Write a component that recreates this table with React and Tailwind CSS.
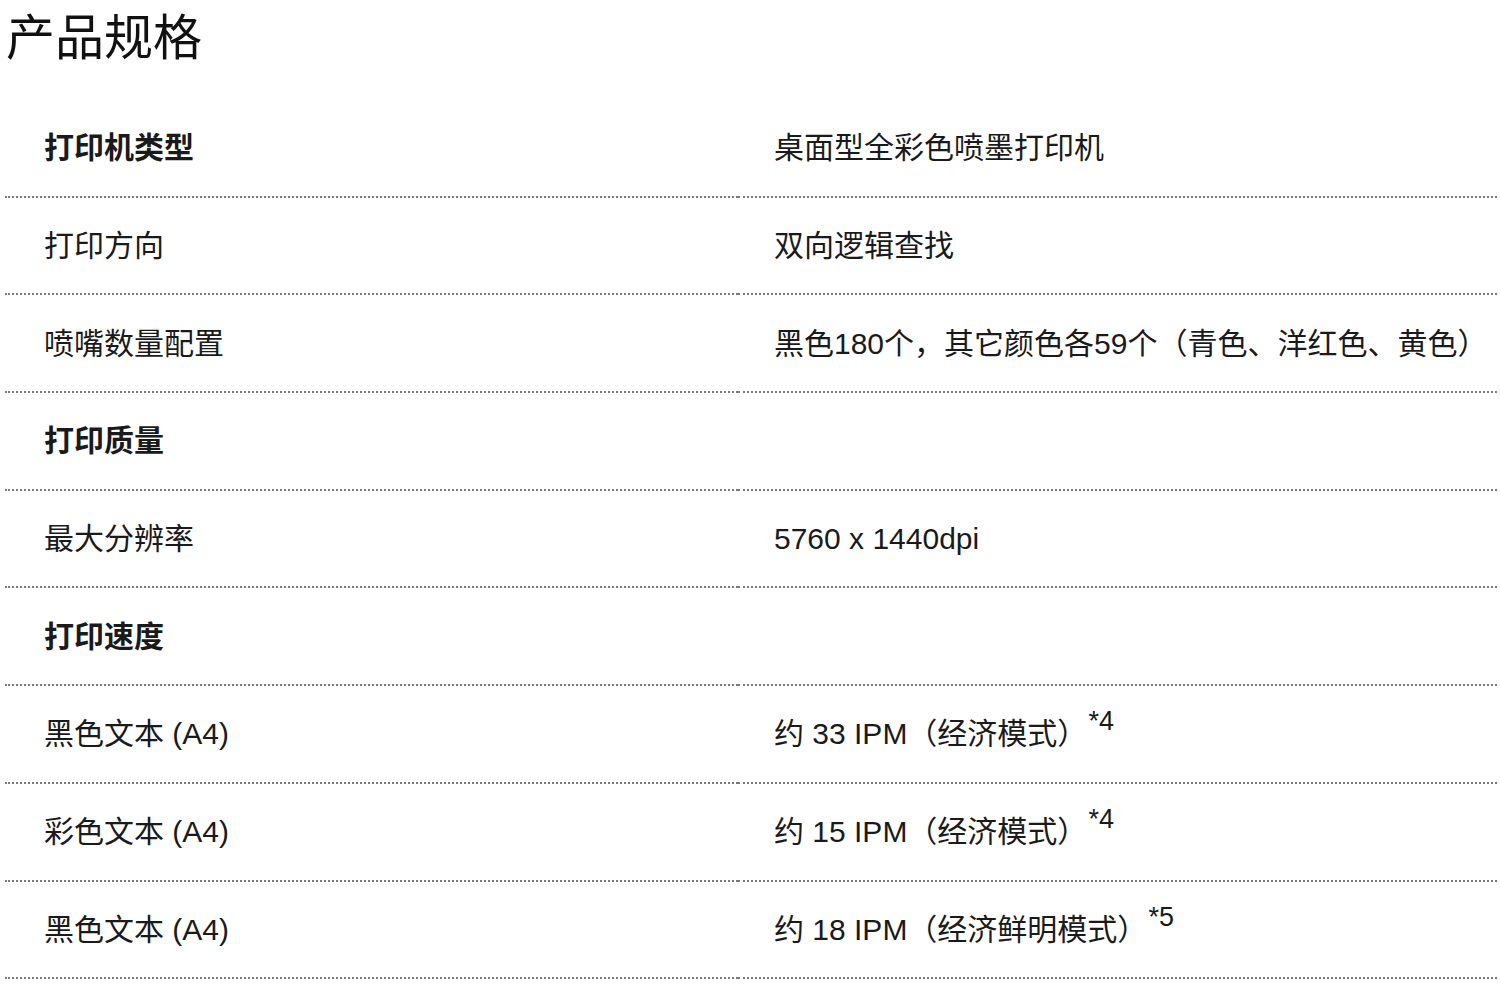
import React from 'react';

const rows = [
  { label: '打印机类型', value: '桌面型全彩色喷墨打印机', bold: true },
  { label: '打印方向', value: '双向逻辑查找' },
  { label: '喷嘴数量配置', value: '黑色180个，其它颜色各59个（青色、洋红色、黄色）' },
  { label: '打印质量', value: '', bold: true },
  { label: '最大分辨率', value: '5760 x 1440dpi' },
  { label: '打印速度', value: '', bold: true },
  { label: '黑色文本 (A4)', value: '约 33 IPM（经济模式）', note: '*4' },
  { label: '彩色文本 (A4)', value: '约 15 IPM（经济模式）', note: '*4' },
  { label: '黑色文本 (A4)', value: '约 18 IPM（经济鲜明模式）', note: '*5' },
];

const font = { fontFamily: '"Liberation Sans", "Noto Sans CJK SC", sans-serif' };

export default function App() {
  return (
    <div className="w-[1500px] h-[997px] bg-white text-[#1a1a1a] overflow-hidden" style={font}>
      <h1 className="pl-[6px] pt-[10px] text-[49px] leading-[56px] font-normal text-[#111]">产品规格</h1>
      <div className="mt-[34px] ml-[5px] w-[1492px]">
        {rows.map((r, i) => (
          <div key={i} className="grid grid-cols-[733px_1fr] h-[97.7px]">
            <div className="flex items-center pl-[39px] border-b-2 border-dotted border-[#7a7a7a]">
              <span className={`text-[30px] ${r.bold ? 'font-bold' : ''}`}>{r.label}</span>
            </div>
            <div className="flex items-center pl-[36px] border-b-2 border-dotted border-[#7a7a7a]">
              <span className="text-[30px]">
                {r.value}
                {r.note && (
                  <sup className="text-[27px] relative -top-[14px] ml-[1px]">{r.note}</sup>
                )}
              </span>
            </div>
          </div>
        ))}
      </div>
    </div>
  );
}
